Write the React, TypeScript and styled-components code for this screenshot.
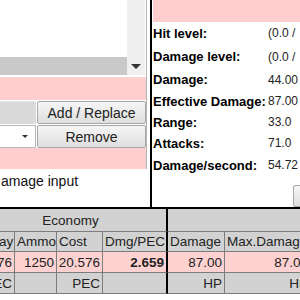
import React from "react";
import styled, { createGlobalStyle } from "styled-components";

const Global = createGlobalStyle`
  html, body { margin: 0; padding: 0; background: #fff; }
  body { font-family: "Liberation Sans", Arial, sans-serif; overflow: hidden; }
`;

const Frame = styled.div`
  width: 300px;
  height: 300px;
  overflow: hidden;
  background: #fff;
  display: flex;
  flex-direction: column;
`;

const Top = styled.div`
  display: flex;
  height: 207px;
  flex: none;
`;

const Left = styled.div`
  width: 147px;
  flex: none;
  display: flex;
  flex-direction: column;
`;

const LeftBody = styled.div`
  border-right: 1px solid #b4b4b4;
  width: 146px;
  display: flex;
  flex-direction: column;
`;

const ListBox = styled.div`
  height: 75px;
  display: grid;
  grid-template-columns: 127px 18px;
`;

const ListMain = styled.div`
  display: flex;
  flex-direction: column;
`;

const ListWhite = styled.div`
  height: 57px;
  background: #fff;
`;

const HBar = styled.div`
  height: 18px;
  background: #c9c9c9;
`;

const VBar = styled.div`
  background: #efefef;
  display: flex;
  flex-direction: column;
  justify-content: flex-end;
  align-items: center;
`;

const Arrow = styled.div<{ $size: number }>`
  width: 0;
  height: 0;
  border-left: ${(p) => p.$size}px solid transparent;
  border-right: ${(p) => p.$size}px solid transparent;
  border-top: ${(p) => p.$size}px solid #333;
`;

const ArrowCell = styled.div`
  height: 18px;
  display: flex;
  align-items: center;
  justify-content: center;
`;

const Band = styled.div<{ $h: number; $bg?: string }>`
  height: ${(p) => p.$h}px;
  background: ${(p) => p.$bg || "#ffcfcf"};
  flex: none;
`;

const ControlRow = styled.div`
  display: grid;
  grid-template-columns: 36px 1fr;
  gap: 1px;
  height: 23px;
  padding-top: 1px;
`;

const GreyField = styled.div`
  background: #dadada;
  border-top: 1px solid #e8e8e8;
`;

const SelectField = styled.div`
  background: #fff;
  border: 1px solid #b8b8b8;
  border-left: none;
  display: flex;
  align-items: center;
  justify-content: flex-end;
  padding-right: 7px;
`;

const Button = styled.div`
  background: linear-gradient(#f6f6f6, #dedede);
  border: 1px solid #a8a8a8;
  border-radius: 2px;
  font-size: 14px;
  color: #222;
  display: flex;
  align-items: center;
  justify-content: center;
  box-sizing: border-box;
`;

const CheckText = styled.div`
  font-size: 14px;
  color: #111;
  padding-top: 4px;
  padding-left: 1px;
  white-space: nowrap;
`;

const Right = styled.div`
  flex: 1;
  margin-left: 3px;
  border-left: 2px solid #000;
  padding-left: 1px;
  display: flex;
  flex-direction: column;
  overflow: hidden;
`;

const StatRow = styled.div<{ $h: number }>`
  height: ${(p) => p.$h}px;
  display: grid;
  grid-template-columns: 115px 1fr;
  align-items: center;
  white-space: nowrap;
`;

const Label = styled.div`
  font-size: 13px;
  font-weight: bold;
  color: #000;
`;

const Value = styled.div`
  font-size: 12px;
  color: #222;
`;

const ButtonRow = styled.div`
  padding-top: 9px;
  padding-left: 140px;
  display: flex;
`;

const SmallButton = styled(Button)`
  width: 60px;
  height: 22px;
  flex: none;
`;

const Divider = styled.div`
  height: 2px;
  background: #000;
  flex: none;
`;

const Table = styled.div`
  display: grid;
  grid-template-columns: 42px 42px 46px 65px 57px 86px;
  grid-template-rows: 23px 20px 21px 21px;
  margin-left: -27px;
  width: 338px;
  font-size: 13.5px;
  color: #222;
`;

const Cell = styled.div<{ $bg: string; $span?: number; $align?: string; $thick?: boolean; $bold?: boolean }>`
  grid-column: span ${(p) => p.$span || 1};
  background: ${(p) => p.$bg};
  border-right: ${(p) => (p.$thick ? "2px solid #000" : "1px solid #7c7c7c")};
  border-bottom: 1px solid #7c7c7c;
  box-sizing: border-box;
  display: flex;
  align-items: center;
  justify-content: ${(p) => p.$align || "flex-start"};
  padding: ${(p) => (p.$align === "flex-end" ? "0 2px 0 1px" : "0 0 0 2px")};
  white-space: nowrap;
  overflow: hidden;
  font-weight: ${(p) => (p.$bold ? "bold" : "normal")};
`;

const GREY = "#d2d2d2";
const PINK = "#ffd2d2";

const stats: [string, string, number][] = [
  ["Hit level:", "(0.0 /", 23],
  ["Damage level:", "(0.0 /", 24],
  ["Damage:", "44.00", 23],
  ["Effective Damage:", "87.00", 21],
  ["Range:", "33.0", 21],
  ["Attacks:", "71.0", 22],
  ["Damage/second:", "54.72", 22],
];

const cols = [
  { head: "Decay", val: "20.576", unit: "PEC", thick: false },
  { head: "Ammo", val: "1250", unit: "", thick: false },
  { head: "Cost", val: "20.576", unit: "PEC", thick: false },
  { head: "Dmg/PEC", val: "2.659", unit: "", thick: true, bold: true },
  { head: "Damage", val: "87.00", unit: "HP", thick: false },
  { head: "Max.Damage", val: "87.00", unit: "HP", thick: false },
];

export default function App() {
  return (
    <Frame>
      <Global />
      <Top>
        <Left>
          <LeftBody>
            <ListBox>
              <ListMain>
                <ListWhite />
                <HBar />
              </ListMain>
              <VBar>
                <ArrowCell>
                  <Arrow $size={5} />
                </ArrowCell>
              </VBar>
            </ListBox>
            <Band $h={2} $bg="#fff" />
            <Band $h={23} />
            <ControlRow>
              <GreyField />
              <Button>Add / Replace</Button>
            </ControlRow>
            <ControlRow>
              <SelectField>
                <Arrow $size={3} />
              </SelectField>
              <Button>Remove</Button>
            </ControlRow>
            <Band $h={21} />
          </LeftBody>
          <CheckText>amage input</CheckText>
        </Left>
        <Right>
          <Band $h={22} />
          {stats.map(([l, v, h]) => (
            <StatRow key={l} $h={h}>
              <Label>{l}</Label>
              <Value>{v}</Value>
            </StatRow>
          ))}
          <ButtonRow>
            <SmallButton />
          </ButtonRow>
        </Right>
      </Top>
      <Divider />
      <Table>
        <Cell $bg={GREY} $span={4} $align="center" $thick>
          Economy
        </Cell>
        <Cell $bg={GREY} $span={2} />
        {cols.map((c) => (
          <Cell key={"h" + c.head} $bg={GREY} $thick={c.thick}>
            {c.head}
          </Cell>
        ))}
        {cols.map((c) => (
          <Cell key={"v" + c.head} $bg={PINK} $align="flex-end" $thick={c.thick} $bold={c.bold}>
            {c.val}
          </Cell>
        ))}
        {cols.map((c) => (
          <Cell key={"u" + c.head} $bg={GREY} $align="flex-end" $thick={c.thick}>
            {c.unit}
          </Cell>
        ))}
      </Table>
    </Frame>
  );
}
